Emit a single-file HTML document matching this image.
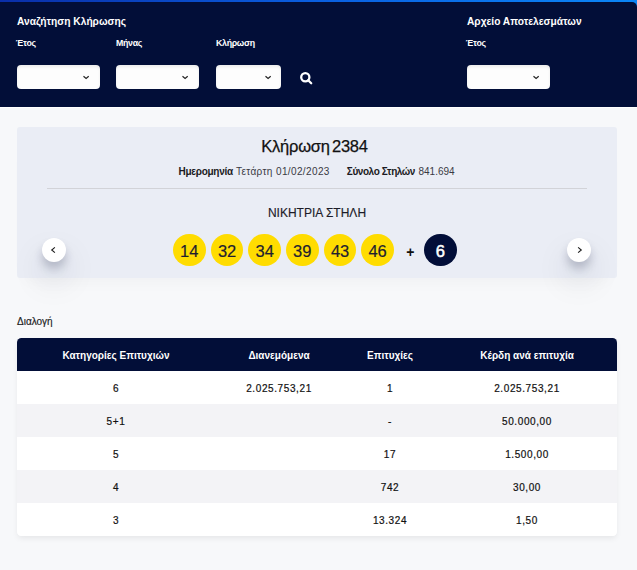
<!DOCTYPE html>
<html><head><meta charset="utf-8">
<style>
*{margin:0;padding:0;box-sizing:border-box}
html,body{width:637px;height:570px;overflow:hidden;background:#f7f8fa;font-family:"Liberation Sans",sans-serif;position:relative}
.topbar{position:absolute;left:0;top:0;width:637px;height:8px;background:linear-gradient(90deg,#0a2ea8 0%,#0a5fe0 50%,#0b86f7 100%)}
.header{position:absolute;left:0;top:2px;width:637px;height:105px;background:#020e38;border-top-right-radius:5px}
.hline{position:absolute;left:0;top:107px;width:637px;height:1px;background:#fff}
.t{position:absolute;white-space:nowrap}
.h1{color:#fff;font-weight:bold;font-size:10.2px}
.lbl{color:#fff;font-weight:bold;font-size:8.8px;letter-spacing:-0.3px}
.sel{position:absolute;top:65px;height:24px;background:#fdfdfd;border-radius:4px;box-shadow:inset 0 2px 3px rgba(0,0,0,0.07)}
.chev{position:absolute;top:10px;width:8px;height:5px;overflow:visible}
.card{position:absolute;left:17px;top:127px;width:600px;height:151px;background:#eaedf5;border-radius:3px;box-shadow:0 12px 16px -10px rgba(0,0,0,0.04)}
.ball{position:absolute;top:233.8px;width:32.6px;height:32.6px;border-radius:50%;background:#ffdc00;color:#1e1e30;font-size:16.5px;text-align:center;line-height:35px;-webkit-text-stroke:0.2px #1e1e30}
.nav{position:absolute;top:238px;width:24px;height:24px;border-radius:50%;background:#fff;box-shadow:0 7px 9px rgba(30,35,70,0.22),0 18px 32px rgba(30,35,60,0.15)}
.table{position:absolute;left:17px;top:338px;width:600px;height:198px;border-radius:4.5px;overflow:hidden;box-shadow:0 3px 6px -1px rgba(0,0,0,0.08)}
.row{position:absolute;left:0;width:600px;height:33px}
.cell{position:absolute;top:1px;height:33px;line-height:33px;text-align:center;font-size:10px;color:#111;white-space:nowrap;letter-spacing:0.6px;-webkit-text-stroke:0.2px #111}
.th{color:#fff;font-weight:bold;letter-spacing:0;-webkit-text-stroke:0}
</style></head><body>
<div class="topbar"></div>
<div class="header"></div>
<div class="hline"></div>

<div class="t h1" style="left:17px;top:15.5px">Αναζήτηση Κλήρωσης</div>
<div class="t lbl" style="left:15.8px;top:38.2px">Έτος</div>
<div class="t lbl" style="left:116px;top:38.2px">Μήνας</div>
<div class="t lbl" style="left:216px;top:38.2px">Κλήρωση</div>

<div class="sel" style="left:17px;width:83px"><svg class="chev" style="left:66px" viewBox="0 0 8 5"><path d="M0.5 1.2 L3.1 3.4 L5.7 1.2" fill="none" stroke="#222" stroke-width="1.2"/></svg></div>
<div class="sel" style="left:116px;width:83px"><svg class="chev" style="left:66px" viewBox="0 0 8 5"><path d="M0.5 1.2 L3.1 3.4 L5.7 1.2" fill="none" stroke="#222" stroke-width="1.2"/></svg></div>
<div class="sel" style="left:216px;width:65px"><svg class="chev" style="left:49px" viewBox="0 0 8 5"><path d="M0.5 1.2 L3.1 3.4 L5.7 1.2" fill="none" stroke="#222" stroke-width="1.2"/></svg></div>
<svg style="position:absolute;left:298px;top:70px" width="16" height="16" viewBox="0 0 16 16"><circle cx="7.3" cy="7.2" r="4.1" fill="none" stroke="#fff" stroke-width="2.3"/><path d="M10.2 10.2 L13.2 13.2" stroke="#fff" stroke-width="2.3" stroke-linecap="round"/></svg>

<div class="t h1" style="left:467px;top:15.5px">Αρχείο Αποτελεσμάτων</div>
<div class="t lbl" style="left:465.8px;top:38.2px">Έτος</div>
<div class="sel" style="left:467px;width:83px"><svg class="chev" style="left:66px" viewBox="0 0 8 5"><path d="M0.5 1.2 L3.1 3.4 L5.7 1.2" fill="none" stroke="#222" stroke-width="1.2"/></svg></div>

<div class="card"></div>
<div class="t" style="left:14.5px;width:600px;text-align:center;top:137px;font-size:16.5px;color:#111;letter-spacing:-0.25px;word-spacing:-2px;-webkit-text-stroke:0.25px #111">Κλήρωση 2384</div>
<div class="t" style="left:178.5px;top:166px;font-size:10px;font-weight:bold;color:#1a1a22;letter-spacing:-0.28px">Ημερομηνία</div>
<div class="t" style="left:236px;top:166px;font-size:10px;color:#3a3a44;letter-spacing:0.38px">Τετάρτη 01/02/2023</div>
<div class="t" style="left:346.8px;top:166px;font-size:10px;font-weight:bold;color:#1a1a22;letter-spacing:-0.42px">Σύνολο Στηλών</div>
<div class="t" style="left:418.5px;top:166px;font-size:10px;color:#3a3a44">841.694</div>
<div style="position:absolute;left:47px;top:188px;width:540px;height:1px;background:#d2d3d8"></div>
<div class="t" style="left:17px;width:600px;text-align:center;top:206px;font-size:12px;color:#1c1c28;-webkit-text-stroke:0.15px #1c1c28">ΝΙΚΗΤΡΙΑ ΣΤΗΛΗ</div>

<div class="ball" style="left:173px">14</div>
<div class="ball" style="left:210.8px">32</div>
<div class="ball" style="left:248.4px">34</div>
<div class="ball" style="left:286px">39</div>
<div class="ball" style="left:323.8px">43</div>
<div class="ball" style="left:361.3px">46</div>
<div class="t" style="left:406.3px;top:244.3px;font-size:14px;font-weight:bold;color:#111">+</div>
<div class="ball" style="left:424px;background:#020e38;color:#fff;-webkit-text-stroke:0.5px #fff">6</div>

<div class="nav" style="left:42px"><svg style="position:absolute;left:0;top:0" width="24" height="24" viewBox="0 0 24 24"><path d="M12.9 9.3 L9.7 12 L12.9 14.7" fill="none" stroke="#1a1a1a" stroke-width="1.1"/></svg></div>
<div class="nav" style="left:567px"><svg style="position:absolute;left:0;top:0" width="24" height="24" viewBox="0 0 24 24"><path d="M11.1 9.3 L14.3 12 L11.1 14.7" fill="none" stroke="#1a1a1a" stroke-width="1.1"/></svg></div>

<div class="t" style="left:17px;top:316px;font-size:10px;color:#1a1a22;-webkit-text-stroke:0.15px #1a1a22">Διαλογή</div>

<div class="table">
  <div class="row" style="top:0;background:#020e38">
    <div class="cell th" style="left:0;width:198px">Κατηγορίες Επιτυχιών</div>
    <div class="cell th" style="left:198px;width:128px">Διανεμόμενα</div>
    <div class="cell th" style="left:326px;width:94px">Επιτυχίες</div>
    <div class="cell th" style="left:420px;width:180px">Κέρδη ανά επιτυχία</div>
  </div>
  <div class="row" style="top:33px;background:#fff">
    <div class="cell" style="left:0;width:198px">6</div>
    <div class="cell" style="left:198px;width:128px">2.025.753,21</div>
    <div class="cell" style="left:326px;width:94px">1</div>
    <div class="cell" style="left:420px;width:180px">2.025.753,21</div>
  </div>
  <div class="row" style="top:66px;background:#f3f3f6">
    <div class="cell" style="left:0;width:198px">5+1</div>
    <div class="cell" style="left:198px;width:128px"></div>
    <div class="cell" style="left:326px;width:94px">-</div>
    <div class="cell" style="left:420px;width:180px">50.000,00</div>
  </div>
  <div class="row" style="top:99px;background:#fff">
    <div class="cell" style="left:0;width:198px">5</div>
    <div class="cell" style="left:198px;width:128px"></div>
    <div class="cell" style="left:326px;width:94px">17</div>
    <div class="cell" style="left:420px;width:180px">1.500,00</div>
  </div>
  <div class="row" style="top:132px;background:#f3f3f6">
    <div class="cell" style="left:0;width:198px">4</div>
    <div class="cell" style="left:198px;width:128px"></div>
    <div class="cell" style="left:326px;width:94px">742</div>
    <div class="cell" style="left:420px;width:180px">30,00</div>
  </div>
  <div class="row" style="top:165px;background:#fff">
    <div class="cell" style="left:0;width:198px">3</div>
    <div class="cell" style="left:198px;width:128px"></div>
    <div class="cell" style="left:326px;width:94px">13.324</div>
    <div class="cell" style="left:420px;width:180px">1,50</div>
  </div>
</div>
</body></html>
